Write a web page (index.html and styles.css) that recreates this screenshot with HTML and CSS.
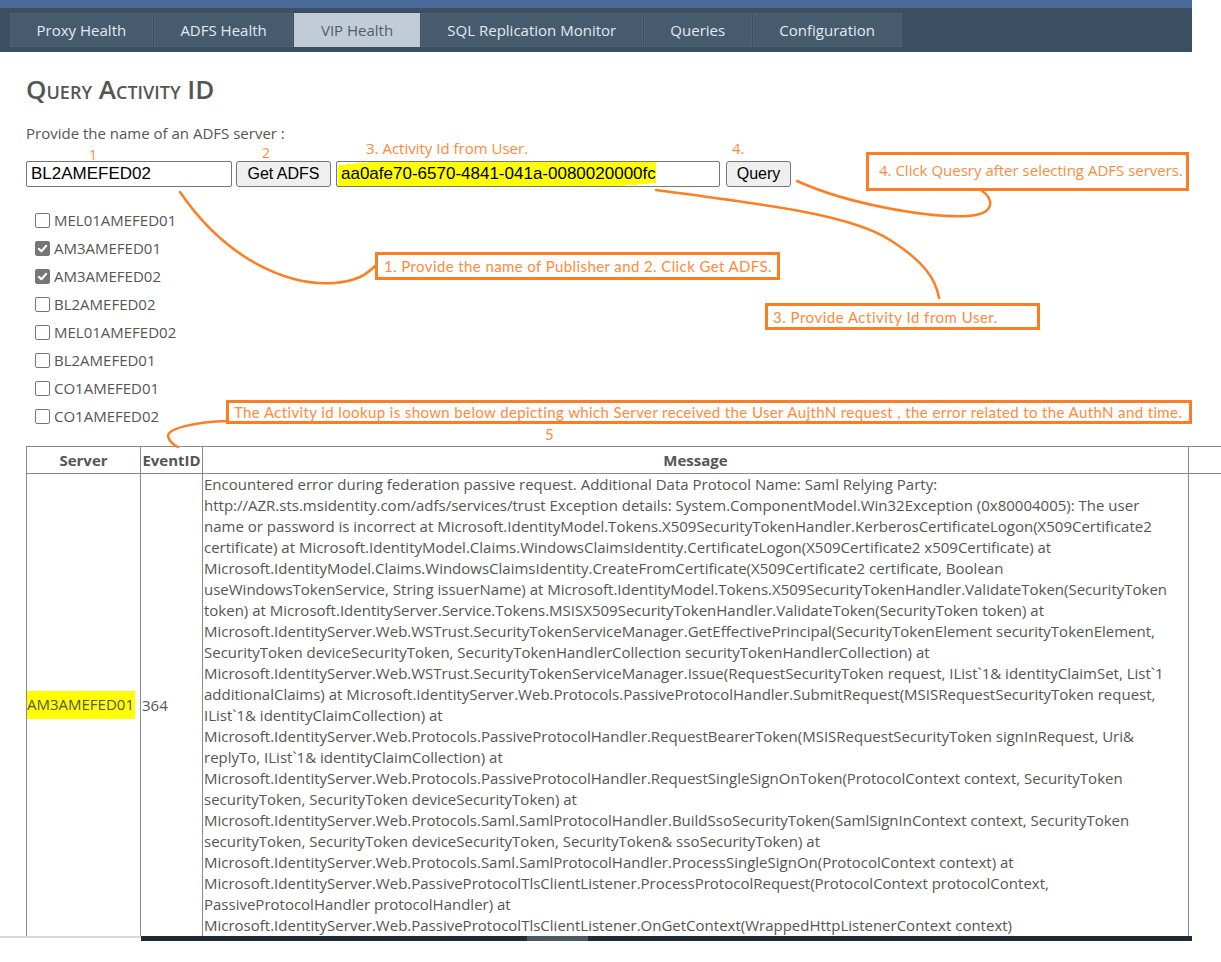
FILE: index.html
```html
<!DOCTYPE html>
<html>
<head>
<meta charset="utf-8">
<title>Query Activity ID</title>
<link rel="stylesheet" href="styles.css">
</head>
<body>
<div class="page">
  <header class="header">
    <div class="strip"></div>
    <nav class="nav">
      <a class="tab">Proxy Health</a>
      <a class="tab">ADFS Health</a>
      <a class="tab active">VIP Health</a>
      <a class="tab">SQL Replication Monitor</a>
      <a class="tab">Queries</a>
      <a class="tab">Configuration</a>
    </nav>
  </header>

  <main class="main">
    <h2 class="title">Query Activity ID</h2>
    <p class="prompt">Provide the name of an ADFS server :</p>
    <div class="form-row">
      <input class="textbox server-box" type="text" value="BL2AMEFED02">
      <button class="btn btn-adfs" type="button">Get ADFS</button>
      <input class="textbox activity-box" type="text" value="aa0afe70-6570-4841-041a-0080020000fc">
      <button class="btn btn-query" type="button">Query</button>
    </div>

    <ul class="servers">
      <li class="server"><span class="check"></span>MEL01AMEFED01</li>
      <li class="server"><span class="check checked"><svg viewBox="0 0 14 14"><path d="M3 7.3 L5.8 10 L11 4" /></svg></span>AM3AMEFED01</li>
      <li class="server"><span class="check checked"><svg viewBox="0 0 14 14"><path d="M3 7.3 L5.8 10 L11 4" /></svg></span>AM3AMEFED02</li>
      <li class="server"><span class="check"></span>BL2AMEFED02</li>
      <li class="server"><span class="check"></span>MEL01AMEFED02</li>
      <li class="server"><span class="check"></span>BL2AMEFED01</li>
      <li class="server"><span class="check"></span>CO1AMEFED01</li>
      <li class="server"><span class="check"></span>CO1AMEFED02</li>
    </ul>

    <table class="results">
      <thead>
        <tr>
          <th class="col-server">Server</th>
          <th class="col-event">EventID</th>
          <th class="col-message">Message</th>
          <th class="col-extra"></th>
        </tr>
      </thead>
      <tbody>
        <tr>
          <td class="cell-server"><span class="marker">AM3AMEFED01</span></td>
          <td class="cell-event">364</td>
          <td class="cell-message">Encountered error during federation passive request. Additional Data Protocol Name: Saml Relying Party:<br>http://AZR.sts.msidentity.com/adfs/services/trust Exception details: System.ComponentModel.Win32Exception (0x80004005): The user<br>name or password is incorrect at Microsoft.IdentityModel.Tokens.X509SecurityTokenHandler.KerberosCertificateLogon(X509Certificate2<br>certificate) at Microsoft.IdentityModel.Claims.WindowsClaimsIdentity.CertificateLogon(X509Certificate2 x509Certificate) at<br>Microsoft.IdentityModel.Claims.WindowsClaimsIdentity.CreateFromCertificate(X509Certificate2 certificate, Boolean<br>useWindowsTokenService, String issuerName) at Microsoft.IdentityModel.Tokens.X509SecurityTokenHandler.ValidateToken(SecurityToken<br>token) at Microsoft.IdentityServer.Service.Tokens.MSISX509SecurityTokenHandler.ValidateToken(SecurityToken token) at<br>Microsoft.IdentityServer.Web.WSTrust.SecurityTokenServiceManager.GetEffectivePrincipal(SecurityTokenElement securityTokenElement,<br>SecurityToken deviceSecurityToken, SecurityTokenHandlerCollection securityTokenHandlerCollection) at<br>Microsoft.IdentityServer.Web.WSTrust.SecurityTokenServiceManager.Issue(RequestSecurityToken request, IList`1&amp; identityClaimSet, List`1<br>additionalClaims) at Microsoft.IdentityServer.Web.Protocols.PassiveProtocolHandler.SubmitRequest(MSISRequestSecurityToken request,<br>IList`1&amp; identityClaimCollection) at<br>Microsoft.IdentityServer.Web.Protocols.PassiveProtocolHandler.RequestBearerToken(MSISRequestSecurityToken signInRequest, Uri&amp;<br>replyTo, IList`1&amp; identityClaimCollection) at<br>Microsoft.IdentityServer.Web.Protocols.PassiveProtocolHandler.RequestSingleSignOnToken(ProtocolContext context, SecurityToken<br>securityToken, SecurityToken deviceSecurityToken) at<br>Microsoft.IdentityServer.Web.Protocols.Saml.SamlProtocolHandler.BuildSsoSecurityToken(SamlSignInContext context, SecurityToken<br>securityToken, SecurityToken deviceSecurityToken, SecurityToken&amp; ssoSecurityToken) at<br>Microsoft.IdentityServer.Web.Protocols.Saml.SamlProtocolHandler.ProcessSingleSignOn(ProtocolContext context) at<br>Microsoft.IdentityServer.Web.PassiveProtocolTlsClientListener.ProcessProtocolRequest(ProtocolContext protocolContext,<br>PassiveProtocolHandler protocolHandler) at<br>Microsoft.IdentityServer.Web.PassiveProtocolTlsClientListener.OnGetContext(WrappedHttpListenerContext context)</td>
          <td class="cell-extra"></td>
        </tr>
      </tbody>
    </table>
  </main>

  <!-- annotation overlay -->
  <svg class="curves" viewBox="0 0 1221 962" width="1221" height="962">
    <path d="M180 192 C 228 262 290 286 334 283 C 358 281 367 274 375 266" />
    <path d="M656 190 C 760 204 850 214 890 240 C 925 262 936 280 939 298" />
    <path d="M797 181 C 850 205 930 218 968 216 C 996 214 994 199 981 190" />
    <path d="M228 421 C 196 422 168 428 168 436 C 169 442 174 445 178 447" />
  </svg>
  <span class="note-label label-1">1</span>
  <span class="note-label label-2">2</span>
  <span class="note-label label-3">3. Activity Id from User.</span>
  <span class="note-label label-4">4.</span>
  <div class="note-box box-4">4. Click Quesry after selecting ADFS servers.</div>
  <div class="note-box box-1">1. Provide the name of Publisher and 2. Click Get ADFS.</div>
  <div class="note-box box-3">3. Provide Activity Id from User.</div>
  <div class="note-box box-5">The Activity id lookup is shown below depicting which Server received the User AujthN request , the error related to the AuthN and time.</div>
  <span class="note-label label-5">5</span>
</div>
<div class="bottombar">
  <div class="bar-left"></div>
  <div class="bar-track"><div class="bar-thumb"></div></div>
</div>
</body>
</html>
```

FILE: styles.css
```css
html, body {
  margin: 0;
  padding: 0;
  overflow: hidden;
  background: #ffffff;
}

body {
  font-family: "Open Sans", "Noto Sans", sans-serif;
  font-size: 15px;
  color: #555555;
  width: 1221px;
  height: 962px;
}

.page {
  position: relative;
  height: 936px;
  overflow: hidden;
}

/* ---------- header ---------- */
.header {
  width: 1192px;
}

.strip {
  height: 8px;
  background: #4a6a9a;
}

.nav {
  display: flex;
  height: 44px;
  box-sizing: border-box;
  padding: 5px 0 0 10px;
  background: #3b4f63;
}

.tab {
  display: flex;
  align-items: center;
  height: 34px;
  box-sizing: border-box;
  padding: 0 25.6px;
  margin-right: 1px;
  background: #475b6f;
  border: 1px solid #4f6378;
  color: #e3e9ef;
  font-size: 15px;
  cursor: pointer;
}

.tab.active {
  background: #c2ccd6;
  border-color: #c2ccd6;
  color: #4d5e70;
}

/* ---------- main ---------- */
.main {
  padding-left: 26px;
}

.title {
  margin: 22px 0 0;
  height: 30px;
  line-height: 30px;
  font-size: 26px;
  font-weight: 600;
  font-variant: small-caps;
  color: #555555;
}

.prompt {
  margin: 19px 0 0;
  line-height: 20px;
  font-size: 15px;
}

.form-row {
  display: flex;
  margin-top: 18px;
  height: 26px;
}

.textbox {
  height: 26px;
  box-sizing: border-box;
  border: 1px solid #767676;
  border-radius: 2px;
  padding: 0 4px;
  font-family: "Liberation Sans", Arial, sans-serif;
  font-size: 17px;
  color: #000000;
  outline: none;
}

.server-box {
  width: 206px;
}

.activity-box {
  width: 384px;
  margin-left: 5px;
  padding-left: 4px;
  background: linear-gradient(175deg, transparent 0 6%, #ffff00 6% 94%, transparent 94%) 1px 0 / 318px 100% no-repeat, #ffffff;
}

.btn {
  height: 26px;
  box-sizing: border-box;
  border: 1px solid #767676;
  border-radius: 3px;
  background: #efefef;
  font-family: "Liberation Sans", Arial, sans-serif;
  font-size: 16px;
  color: #000000;
  padding: 0 8px;
}

.btn-adfs {
  width: 95px;
  margin-left: 4px;
}

.btn-query {
  width: 65px;
  margin-left: 6px;
}

.servers {
  list-style: none;
  margin: 19px 0 0;
  padding: 0 0 0 8px;
}

.server {
  display: flex;
  align-items: center;
  height: 28px;
  font-size: 15px;
  color: #555555;
}

.check {
  display: inline-flex;
  width: 13px;
  height: 13px;
  border: 1px solid #767676;
  border-radius: 2px;
  margin: 0 4px 0 1px;
  background: #ffffff;
}

.check.checked {
  background: #767676;
}

.check svg {
  width: 13px;
  height: 13px;
}

.check svg path {
  fill: none;
  stroke: #ffffff;
  stroke-width: 2.2;
  stroke-linecap: round;
  stroke-linejoin: round;
}

/* ---------- table ---------- */
.results {
  margin-top: 16px;
  border-collapse: collapse;
  table-layout: fixed;
  width: 1280px;
}

.results th,
.results td {
  border: 1px solid #8a8a8a;
  padding: 0 1px;
}

.results th {
  height: 26px;
  font-weight: 700;
  font-size: 15px;
  color: #555555;
  text-align: center;
  line-height: 26px;
}

.results thead th.col-extra {
  border-right: none;
  border-bottom: none;
}

.col-server { width: 111px; }
.col-event { width: 59px; }
.col-message { width: 983px; }

.results td {
  vertical-align: middle;
  font-size: 15px;
  line-height: 21px;
  color: #555555;
}

.cell-message {
  padding: 0 2px;
  white-space: nowrap;
  overflow: hidden;
}

.cell-extra {
  border-bottom: none;
}

.marker {
  display: inline-block;
  background: #ffff00;
  padding: 3px 1px 4px 0;
  margin-left: -1px;
}

/* ---------- annotations ---------- */
.curves {
  position: absolute;
  left: 0;
  top: 0;
  pointer-events: none;
}

.curves path {
  fill: none;
  stroke: #fd7e23;
  stroke-width: 2.5;
  stroke-linecap: round;
}

.note-label {
  position: absolute;
  font-family: "Open Sans", sans-serif;
  font-size: 14px;
  line-height: 18px;
  color: #ff8a3d;
  white-space: nowrap;
}

.label-1 { left: 89px; top: 146px; }
.label-2 { left: 262px; top: 144px; }
.label-3 { left: 366px; top: 139px; font-size: 15px; }
.label-4 { left: 732px; top: 139px; font-size: 15px; }
.label-5 { left: 545px; top: 425px; font-family: "Lato", sans-serif; font-size: 15px; }

.note-box {
  position: absolute;
  box-sizing: border-box;
  border: 3px solid #fd7d24;
  background: #ffffff;
  color: #ff8a3d;
  white-space: nowrap;
  display: flex;
  align-items: center;
}

.box-4 {
  left: 866px;
  top: 152px;
  width: 323px;
  height: 39px;
  padding: 0 0 3px 10px;
  font-family: "Open Sans", sans-serif;
  font-size: 15px;
}

.box-1 {
  left: 375px;
  top: 252px;
  width: 405px;
  height: 28px;
  padding-left: 6px;
  font-family: "Lato", sans-serif;
  font-size: 15px;
  letter-spacing: 0.4px;
}

.box-3 {
  left: 765px;
  top: 303px;
  width: 275px;
  height: 27px;
  padding-left: 5px;
  font-family: "Lato", sans-serif;
  font-size: 15px;
  letter-spacing: 0.5px;
}

.box-5 {
  left: 226px;
  top: 400px;
  width: 966px;
  height: 24px;
  padding-left: 5px;
  font-family: "Lato", sans-serif;
  font-size: 15px;
  letter-spacing: 0.38px;
}

/* ---------- bottom bar ---------- */
.bottombar {
  display: flex;
  height: 5px;
  width: 1192px;
}

.bar-left {
  width: 141px;
  border-top: 2px solid #d9d9d9;
  box-sizing: border-box;
}

.bar-track {
  flex: 1;
  background: #1f2c37;
  padding-left: 386px;
}

.bar-thumb {
  width: 61px;
  height: 100%;
  background: #4c5a66;
}
```
